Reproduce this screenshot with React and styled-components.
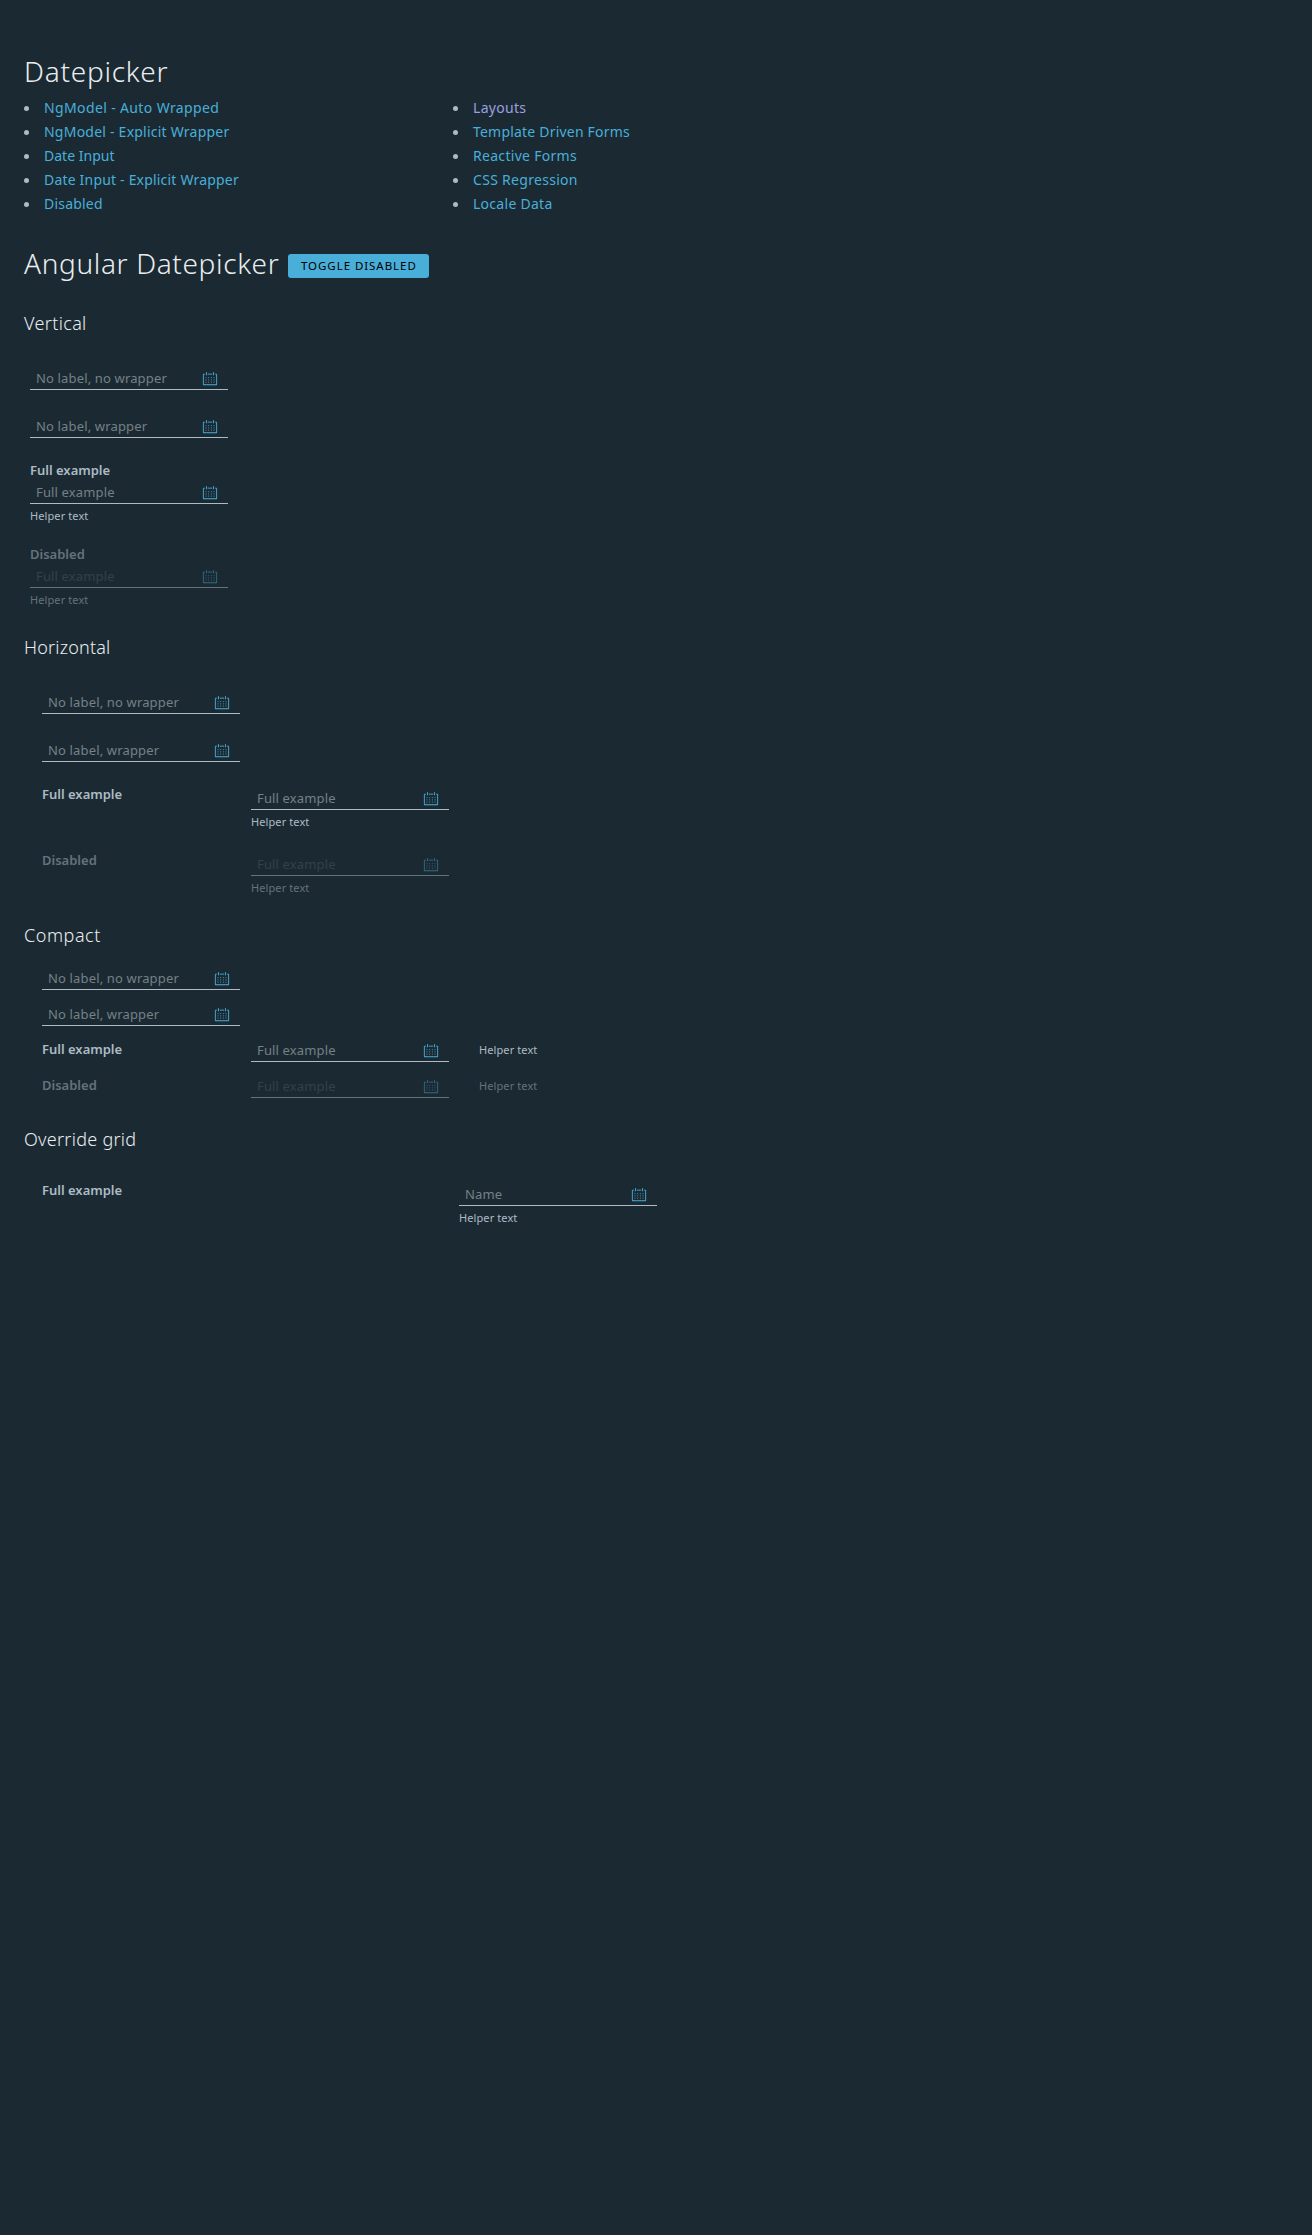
import React from 'react';
import styled, { createGlobalStyle } from 'styled-components';

const GlobalStyle = createGlobalStyle`
  *, *::before, *::after { box-sizing: border-box; }
  body {
    margin: 0;
    min-height: 100vh;
    background: #1b2a32;
    color: #adbbc4;
    font-family: "Noto Sans", "Open Sans", sans-serif;
  }
`;

const Page = styled.main`
  padding: 46px 24px 24px;
`;

const Title = styled.h2`
  margin: 0;
  height: ${(p) => (p.$tight ? '48px' : '50px')};
  font-size: 28px;
  font-weight: 300;
  line-height: 50px;
  letter-spacing: ${(p) => (p.$tight ? '0.64px' : '0.75px')};
  color: #eaedf0;
`;

const TitleRow = styled.div`
  display: flex;
  align-items: flex-start;
  gap: 9px;
  margin-top: 22px;
`;

const ToggleButton = styled.button`
  width: 141px;
  height: 24px;
  margin-top: 16px;
  padding: 0;
  border: 0;
  border-radius: 3px;
  background: #49afd9;
  color: #000;
  font: 400 11.5px/24px "Noto Sans", sans-serif;
  letter-spacing: 0.95px;
  text-align: center;
  text-transform: uppercase;
`;

const LinkColumns = styled.nav`
  display: grid;
  grid-template-columns: 429px 429px;
`;

const LinkList = styled.ul`
  margin: 0;
  padding: 0;
  list-style: none;
`;

const LinkItem = styled.li`
  display: flex;
  align-items: center;
  gap: 15px;
  height: 24px;

  &::before {
    content: '';
    width: 5px;
    height: 5px;
    margin-top: 1px;
    border-radius: 50%;
    background: #adbbc4;
  }
`;

const Link = styled.a`
  color: ${(p) => (p.$visited ? '#9b9fe0' : '#49afd9')};
  font-size: 14px;
  line-height: 24px;
  letter-spacing: ${(p) => p.$tracking}px;
  text-decoration: none;
`;

const SectionTitle = styled.h4`
  margin: ${(p) => p.$top || 30}px 0 0;
  height: 24px;
  font-size: 18px;
  font-weight: 300;
  line-height: 22px;
  letter-spacing: ${(p) => p.$tracking}px;
  color: #eaedf0;
`;

const Form = styled.form`
  display: flex;
  flex-direction: column;
  gap: ${(p) => (p.$compact ? 12 : 24)}px;
  padding-top: ${(p) => (p.$compact ? 18 : 30)}px;
  padding-left: ${(p) => (p.$vertical ? 6 : 18)}px;
`;

const Control = styled.div`
  display: ${(p) => (p.$vertical ? 'block' : 'grid')};
  grid-template-columns: ${(p) => p.$labelWidth}px auto;
  justify-content: start;
`;

const Label = styled.label`
  display: block;
  height: 18px;
  padding-top: ${(p) => (p.$compact ? 3 : 0)}px;
  font-size: 13px;
  font-weight: 600;
  line-height: 16px;
  color: ${(p) => (p.$disabled ? '#64737b' : '#adbbc4')};
`;

const Body = styled.div`
  display: ${(p) => (p.$compact ? 'flex' : 'block')};
  gap: 30px;
`;

const Field = styled.div`
  display: flex;
  align-items: flex-start;
  width: 198px;
  height: 24px;
  padding: 0 10px 0 6px;
  border-bottom: 1px solid ${(p) => (p.$disabled ? '#64737b' : '#adbbc4')};
`;

const Input = styled.input`
  flex: 1;
  min-width: 0;
  height: 22px;
  margin-top: 1px;
  padding: 0;
  border: 0;
  outline: 0;
  background: transparent;
  font: 400 13px/22px "Noto Sans", sans-serif;
  letter-spacing: 0.15px;

  &::placeholder {
    color: ${(p) => (p.disabled ? '#32414a' : '#758087')};
    opacity: 1;
  }
`;

const IconSvg = styled.svg`
  flex: none;
  width: 16px;
  height: 16px;
  margin-top: 5px;
  fill: #49afd9;
  opacity: ${(p) => (p.$disabled ? 0.5 : 1)};
`;

const Helper = styled.div`
  height: 18px;
  font-size: 11px;
  line-height: 24px;
  letter-spacing: 0.1px;
  color: ${(p) => (p.$disabled ? '#64737b' : '#adbbc4')};
`;

function CalendarIcon({ disabled }) {
  return (
    <IconSvg viewBox="0 0 36 36" $disabled={disabled} aria-hidden="true">
      <path d="M32.25,6H29V8h3V30H4V8H7V6H3.75A1.78,1.78,0,0,0,2,7.81V30.19A1.78,1.78,0,0,0,3.75,32h28.5A1.78,1.78,0,0,0,34,30.19V7.81A1.78,1.78,0,0,0,32.25,6Z" />
      {[14, 19, 24].map((y) =>
        [8, 14, 20, 26].map((x) => <rect key={`${x}-${y}`} x={x} y={y} width="2" height="2" />)
      )}
      <path d="M10,10a1,1,0,0,0,1-1V3A1,1,0,0,0,9,3V9A1,1,0,0,0,10,10Z" />
      <path d="M26,10a1,1,0,0,0,1-1V3a1,1,0,0,0-2,0V9A1,1,0,0,0,26,10Z" />
      <rect x="13" y="6" width="10" height="2" />
    </IconSvg>
  );
}

function DateControl({ layout, label, placeholder, helper, disabled, labelWidth = 209 }) {
  const compact = layout === 'compact';
  return (
    <Control $vertical={layout === 'vertical' || !label} $labelWidth={labelWidth}>
      {label && <Label $disabled={disabled} $compact={compact}>{label}</Label>}
      <Body $compact={compact}>
        <Field $disabled={disabled}>
          <Input placeholder={placeholder} disabled={disabled} />
          <CalendarIcon disabled={disabled} />
        </Field>
        {helper && <Helper $disabled={disabled}>Helper text</Helper>}
      </Body>
    </Control>
  );
}

function DateForm({ layout }) {
  return (
    <Form $vertical={layout === 'vertical'} $compact={layout === 'compact'}>
      <DateControl layout={layout} placeholder="No label, no wrapper" />
      <DateControl layout={layout} placeholder="No label, wrapper" />
      <DateControl layout={layout} label="Full example" placeholder="Full example" helper />
      <DateControl layout={layout} label="Disabled" placeholder="Full example" helper disabled />
    </Form>
  );
}

const links = [
  [
    ['NgModel - Auto Wrapped', 0.37],
    ['NgModel - Explicit Wrapper', 0.23],
    ['Date Input', 0.02],
    ['Date Input - Explicit Wrapper', 0.19],
    ['Disabled', 0.2],
  ],
  [
    ['Layouts', 0.3],
    ['Template Driven Forms', 0.2],
    ['Reactive Forms', 0.3],
    ['CSS Regression', 0.3],
    ['Locale Data', 0.28],
  ],
];

export default function App() {
  return (
    <>
      <GlobalStyle />
      <Page>
        <Title>Datepicker</Title>
        <LinkColumns>
          {links.map((column, index) => (
            <LinkList key={index}>
              {column.map(([text, tracking]) => (
                <LinkItem key={text}>
                  <Link href="#" $visited={text === 'Layouts'} $tracking={tracking}>{text}</Link>
                </LinkItem>
              ))}
            </LinkList>
          ))}
        </LinkColumns>
        <TitleRow>
          <Title $tight>Angular Datepicker</Title>
          <ToggleButton type="button">Toggle Disabled</ToggleButton>
        </TitleRow>
        <SectionTitle $top={26} $tracking={0.35}>Vertical</SectionTitle>
        <DateForm layout="vertical" />
        <SectionTitle $tracking={0.18}>Horizontal</SectionTitle>
        <DateForm layout="horizontal" />
        <SectionTitle $tracking={0.55}>Compact</SectionTitle>
        <DateForm layout="compact" />
        <SectionTitle $tracking={0.27}>Override grid</SectionTitle>
        <Form>
          <DateControl layout="horizontal" label="Full example" placeholder="Name" helper labelWidth={417} />
        </Form>
      </Page>
    </>
  );
}
